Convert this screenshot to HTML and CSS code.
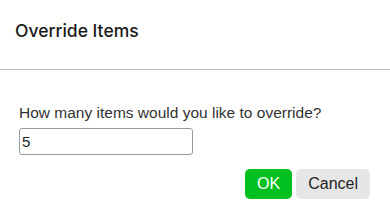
FILE: index.html
```html
<!DOCTYPE html>
<html lang="en">
<head>
  <meta charset="UTF-8">
  <title>Override Items</title>
  <link rel="stylesheet" href="styles.css">
</head>
<body>
  <div class="dialog">
    <div class="dialog-header">
      <h2 class="dialog-title">Override Items</h2>
    </div>
    <div class="dialog-body">
      <label class="prompt" for="count">How many items would you like to override?</label>
      <input class="count-input" id="count" type="text" value="5">
      <div class="actions">
        <button class="btn btn-ok">OK</button>
        <button class="btn btn-cancel">Cancel</button>
      </div>
    </div>
  </div>
</body>
</html>
```

FILE: styles.css
```css
body {
  margin: 0;
  background: #fff;
  font-family: "Liberation Sans", Arial, sans-serif;
  color: #222;
}
.dialog {
  width: 390px;
}
.dialog-header {
  padding: 21px 15px 28px;
  border-bottom: 1px solid #bbb;
}
.dialog-title {
  margin: 0;
  font-family: Inter, "Noto Sans", sans-serif;
  font-size: 17.5px;
  font-weight: 500;
  line-height: 20px;
  color: #1a1a1a;
}
.dialog-body {
  padding: 34px 20px 0 19px;
}
.prompt {
  display: block;
  font-size: 15.5px;
  line-height: 18px;
  color: #333;
}
.count-input {
  display: block;
  margin-top: 6px;
  width: 174px;
  height: 27px;
  box-sizing: border-box;
  border: 1px solid #999;
  border-radius: 3px;
  padding: 0 2px;
  font-family: "Liberation Sans", Arial, sans-serif;
  font-size: 15px;
  color: #222;
}
.actions {
  display: flex;
  justify-content: flex-end;
  gap: 4px;
  margin-top: 14px;
}
.btn {
  height: 30px;
  padding: 0 12px;
  border: none;
  border-radius: 5px;
  font-family: "Liberation Sans", Arial, sans-serif;
  font-size: 16px;
  cursor: pointer;
}
.btn-ok {
  background: #00c020;
  color: #fff;
}
.btn-cancel {
  background: #e6e6e6;
  color: #222;
}
```
